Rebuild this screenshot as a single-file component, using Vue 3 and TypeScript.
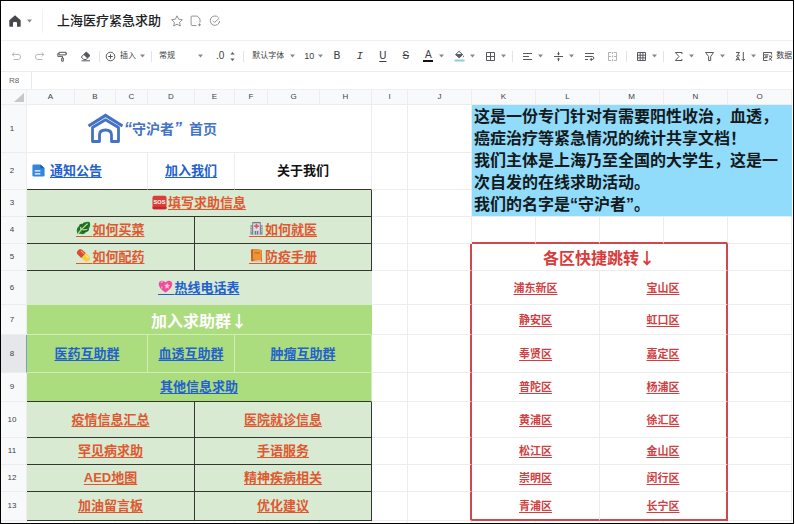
<script setup lang="ts">
type Tone = 'plain' | 'pale' | 'lime'
type Emoji = 'doc' | 'sos' | 'leaf' | 'pill' | 'hospital' | 'book' | 'heart'

interface Cell {
  text: string
  span: number
  tone: Tone
  color?: 'blue' | 'orange' | 'black' | 'white'
  kind?: 'logo' | 'link' | 'text' | 'title'
  emoji?: Emoji
  edges?: string
}

interface Row {
  height: number
  cells: Cell[]
  districts?: [string, string]
}

const columns: { name: string; width: number }[] = [
  { name: 'A', width: 48 },
  { name: 'B', width: 41 },
  { name: 'C', width: 32 },
  { name: 'D', width: 47 },
  { name: 'E', width: 40 },
  { name: 'F', width: 33 },
  { name: 'G', width: 52 },
  { name: 'H', width: 52 },
  { name: 'I', width: 36 },
  { name: 'J', width: 64 },
  { name: 'K', width: 64 },
  { name: 'L', width: 64 },
  { name: 'M', width: 64 },
  { name: 'N', width: 64 },
  { name: 'O', width: 64 },
]

const pair = (a: string, b: string, ea?: Emoji, eb?: Emoji): Cell[] => [
  { text: a, span: 4, tone: 'pale', color: 'orange', kind: 'link', emoji: ea, edges: 'dark-right dark-bottom' },
  { text: b, span: 4, tone: 'pale', color: 'orange', kind: 'link', emoji: eb, edges: 'dark-right dark-bottom' },
]

const rows: Row[] = [
  { height: 48, cells: [{ text: '首页', span: 8, tone: 'plain', kind: 'logo' }] },
  {
    height: 37,
    cells: [
      { text: '通知公告', span: 3, tone: 'plain', color: 'blue', kind: 'link', emoji: 'doc', edges: 'start dark-bottom' },
      { text: '加入我们', span: 2, tone: 'plain', color: 'blue', kind: 'link', edges: 'dark-bottom' },
      { text: '关于我们', span: 3, tone: 'plain', color: 'black', kind: 'text', edges: 'dark-bottom' },
    ],
  },
  {
    height: 27,
    cells: [
      { text: '填写求助信息', span: 8, tone: 'pale', color: 'orange', kind: 'link', emoji: 'sos', edges: 'dark-right dark-bottom' },
    ],
  },
  { height: 27, cells: pair('如何买菜', '如何就医', 'leaf', 'hospital') },
  { height: 27, cells: pair('如何配药', '防疫手册', 'pill', 'book') },
  {
    height: 34,
    cells: [{ text: '热线电话表', span: 8, tone: 'pale', color: 'blue', kind: 'link', emoji: 'heart' }],
    districts: ['浦东新区', '宝山区'],
  },
  {
    height: 30,
    cells: [{ text: '加入求助群↓', span: 8, tone: 'lime', color: 'white', kind: 'title' }],
    districts: ['静安区', '虹口区'],
  },
  {
    height: 38,
    cells: [
      { text: '医药互助群', span: 3, tone: 'lime', color: 'blue', kind: 'link' },
      { text: '血透互助群', span: 2, tone: 'lime', color: 'blue', kind: 'link' },
      { text: '肿瘤互助群', span: 3, tone: 'lime', color: 'blue', kind: 'link' },
    ],
    districts: ['奉贤区', '嘉定区'],
  },
  {
    height: 29,
    cells: [{ text: '其他信息求助', span: 8, tone: 'lime', color: 'blue', kind: 'link', edges: 'dark-bottom' }],
    districts: ['普陀区', '杨浦区'],
  },
  { height: 36, cells: pair('疫情信息汇总', '医院就诊信息'), districts: ['黄浦区', '徐汇区'] },
  { height: 27, cells: pair('罕见病求助', '手语服务'), districts: ['松江区', '金山区'] },
  { height: 27, cells: pair('AED地图', '精神疾病相关'), districts: ['崇明区', '闵行区'] },
  { height: 29, cells: pair('加油留言板', '优化建议'), districts: ['青浦区', '长宁区'] },
]
</script>

<template>
  <div class="frame">
    <header class="topbar">
      <button class="home" aria-label="首页">
        <svg width="12" height="12" viewBox="0 0 12 12"><path d="M6 0.3 0.3 5.2V11q0 .7.7.7h3V8q0-1 1-1h2q1 0 1 1v3.7h3q.7 0 .7-.7V5.2z" fill="#46484c" /></svg>
        <svg class="caret" width="5" height="4" viewBox="0 0 5 4"><path d="M0 .5h5L2.5 3.6z" /></svg>
      </button>
      <h1>上海医疗紧急求助</h1>
      <div class="title-tools">
        <button aria-label="收藏"><svg width="12" height="12" viewBox="0 0 12 12"><path d="m6 .8 1.6 3.4 3.7.5-2.7 2.6.7 3.7L6 9.2 2.7 11l.7-3.7L.7 4.7l3.7-.5z" /></svg></button>
        <button aria-label="移动"><svg width="12" height="12" viewBox="0 0 12 12"><path d="M6.5 10.5H2q-.9 0-.9-.9V2q0-.9.9-.9h5.2L10 3.8v3.7M9.5 8.3v3M8 9.8h3" /></svg></button>
        <button aria-label="已保存"><svg width="12" height="12" viewBox="0 0 12 12"><path d="M9.3 2.4A4.7 4.7 0 1 0 10.6 6M3.8 5.6 5.6 7.4 10.4 3" /></svg></button>
      </div>
    </header>

    <div class="toolbar" role="toolbar">
      <button class="tool faint" aria-label="撤销"><svg width="11" height="11" viewBox="0 0 11 11"><path d="M3.3 1.3 1.2 3.4l2.1 2.1M1.3 3.4h6q2.2 0 2.2 2.5T7.3 8.5H2.5" /></svg></button>
      <button class="tool faint" aria-label="重做"><svg width="11" height="11" viewBox="0 0 11 11"><path d="m7.7 1.3 2.1 2.1-2.1 2.1M9.7 3.4h-6Q1.5 3.4 1.5 5.9T3.7 8.5h4.8" /></svg></button>
      <button class="tool" aria-label="格式刷"><svg width="11" height="11" viewBox="0 0 11 11"><path d="M2 1.3h7v2.6H2zM2 2.6H.8v2.8h4.7V7M4.7 7h1.6v3.2H4.7zM9 2.6h1" /></svg></button>
      <button class="tool" aria-label="清除格式"><svg width="11" height="11" viewBox="0 0 11 11"><path d="M6.3 1 10 4.6 6 8.5H3.7L1.3 6z" /><path class="solid" d="M6.3 1 10 4.6 7.2 7.2 3.6 3.7z" /><path d="M1.5 9.8H10" /></svg></button>
      <span class="divider"></span>
      <button class="insert"><svg width="11" height="11" viewBox="0 0 11 11"><circle cx="5.5" cy="5.5" r="4.3" /><path d="M5.5 3.2v4.6M3.2 5.5h4.6" /></svg>插入<svg class="caret" width="5" height="4" viewBox="0 0 5 4"><path d="M0 .5h5L2.5 3.6z" /></svg></button>
      <span class="divider"></span>
      <label class="choice format"><select aria-label="数字格式"><option>常规</option></select><svg class="caret" width="5" height="4" viewBox="0 0 5 4"><path d="M0 .5h5L2.5 3.6z" /></svg></label>
      <button class="decimals" aria-label="小数位数">.0<svg width="5" height="11" viewBox="0 0 5 11"><path class="solid" d="M.4 3.5h4.2L2.5 1zM.4 7.5h4.2L2.5 10z" /></svg></button>
      <span class="divider"></span>
      <label class="choice family"><select aria-label="字体"><option>默认字体</option></select><svg class="caret" width="5" height="4" viewBox="0 0 5 4"><path d="M0 .5h5L2.5 3.6z" /></svg></label>
      <label class="choice size"><select aria-label="字号"><option>10</option></select><svg class="caret" width="5" height="4" viewBox="0 0 5 4"><path d="M0 .5h5L2.5 3.6z" /></svg></label>
      <button class="tool letter">B</button>
      <button class="tool letter italic">I</button>
      <button class="tool letter underline">U</button>
      <button class="tool letter strike">S</button>
      <button class="tool menu letter"><span class="glyph ink">A</span><svg class="caret" width="5" height="4" viewBox="0 0 5 4"><path d="M0 .5h5L2.5 3.6z" /></svg></button>
      <button class="tool menu" aria-label="填充颜色"><span class="glyph"><svg width="11" height="12" viewBox="0 0 11 12"><path d="M5 1.3 8.6 4.6 5.2 7.8 1.6 4.6zM1.6 4.6h7" /><path class="solid" d="M2 4.8h6.3L5.2 7.7zM9.5 5.3q1 1.4 0 2-1-.6 0-2z" /><path d="M.5 10.5h10" stroke="#8ecbe2" class="swatch" /></svg></span><svg class="caret" width="5" height="4" viewBox="0 0 5 4"><path d="M0 .5h5L2.5 3.6z" /></svg></button>
      <button class="tool menu" aria-label="边框"><span class="glyph"><svg width="11" height="11" viewBox="0 0 11 11"><path d="M1.5 1.5h8v8h-8zM5.5 1.5v8M1.5 5.5h8" /></svg></span><svg class="caret" width="5" height="4" viewBox="0 0 5 4"><path d="M0 .5h5L2.5 3.6z" /></svg></button>
      <span class="divider"></span>
      <button class="tool menu" aria-label="水平对齐"><span class="glyph"><svg width="11" height="11" viewBox="0 0 11 11"><path d="M1 2.5h9M1 5.5h6M1 8.5h9" /></svg></span><svg class="caret" width="5" height="4" viewBox="0 0 5 4"><path d="M0 .5h5L2.5 3.6z" /></svg></button>
      <button class="tool menu" aria-label="垂直对齐"><span class="glyph"><svg width="11" height="11" viewBox="0 0 11 11"><path d="M1 5.5h9M5.5 .8v3M5.5 7.2v3" /><path class="solid" d="M3.9 2.4h3.2L5.5 4.4zM3.9 8.6h3.2L5.5 6.6z" /></svg></span><svg class="caret" width="5" height="4" viewBox="0 0 5 4"><path d="M0 .5h5L2.5 3.6z" /></svg></button>
      <button class="tool" aria-label="自动换行"><svg width="11" height="11" viewBox="0 0 11 11"><path d="M1 2.5h9M1 5.5h7.2q1.6 0 1.6 1.5T8.200 8.500H6.500M1 8.500h3M7.700 7 6.200 8.500l1.500 1.500" /></svg></button>
      <button class="tool faint" aria-label="合并单元格"><svg width="11" height="11" viewBox="0 0 11 11"><path d="M4.2 1.5H1.5v8h2.7M6.8 1.500h2.700v8H6.800M1.500 5.500h2.700M9.500 5.500H6.800M5.500 1v2M5.500 4.500v2M5.500 8v2" /></svg></button>
      <span class="divider"></span>
      <button class="tool menu" aria-label="条件格式"><span class="glyph"><svg width="11" height="11" viewBox="0 0 11 11"><path d="M1.5 1.5h8v8h-8zM1.5 4.2h8M1.5 6.9h8M4.2 1.5v8M6.9 1.5v8" /></svg></span><svg class="caret" width="5" height="4" viewBox="0 0 5 4"><path d="M0 .5h5L2.5 3.6z" /></svg></button>
      <span class="divider"></span>
      <button class="tool menu" aria-label="求和"><span class="glyph"><svg width="11" height="11" viewBox="0 0 11 11"><path d="M9 3V1.5H2.3L6 5.5 2.3 9.5H9V8" /></svg></span><svg class="caret" width="5" height="4" viewBox="0 0 5 4"><path d="M0 .5h5L2.5 3.6z" /></svg></button>
      <button class="tool menu" aria-label="筛选"><span class="glyph"><svg width="11" height="11" viewBox="0 0 11 11"><path d="M1.5 1.5h8L6.7 5.5v4H4.600v-4z" /></svg></span><svg class="caret" width="5" height="4" viewBox="0 0 5 4"><path d="M0 .5h5L2.5 3.6z" /></svg></button>
      <button class="tool menu" aria-label="排序"><span class="glyph"><svg width="11" height="11" viewBox="0 0 11 11"><path d="M1 1.5h3.500L2.700 3.800q2 .2 1.800 1.400M1 5.500 3 4.500M1 9.700l1.900-4 1.800 4M1.600 8.400h2.500M8.300 1v8.500M6.700 8l1.600 1.700L9.900 8" /></svg></span><svg class="caret" width="5" height="4" viewBox="0 0 5 4"><path d="M0 .5h5L2.5 3.6z" /></svg></button>
      <button class="data"><svg width="11" height="11" viewBox="0 0 11 11"><path d="M9.500 3.500v-2h-8v2.300h5M1.500 3.800v2.900h4M1.500 6.700v2.800h4M3 5.200h3M7 5.200h3.300M7 9.500l3-3.500M7.300 7l2.700 2.700" /></svg>数据</button>
    </div>

    <div class="formula">
      <input class="name-box" aria-label="单元格" value="R8" />
      <input class="expression" aria-label="公式" />
    </div>

    <main class="sheet">
      <table>
        <colgroup>
          <col class="head-col" />
          <col v-for="c in columns" :key="c.name" :style="{ width: c.width + 'px' }" />
        </colgroup>
        <thead>
          <tr>
            <th class="corner"><svg width="10" height="9" viewBox="0 0 10 9"><path d="M10 0v9H0z" fill="#c6c7c9" /></svg></th>
            <th v-for="c in columns" :key="c.name" scope="col">{{ c.name }}</th>
          </tr>
        </thead>
        <tbody>
          <tr v-for="(row, i) in rows" :key="i" :style="{ height: row.height + 'px' }">
            <th scope="row" :class="{ current: i === 7 }">{{ i + 1 }}</th>
            <td v-for="cell in row.cells" :key="cell.text" :colspan="cell.span" :class="[cell.tone, cell.color, cell.kind, cell.edges]">
              <span v-if="cell.kind === 'logo'" class="brand">
                <svg width="37" height="31" viewBox="0 0 37 31" fill="none" stroke="#4472c4">
                  <path d="M1.500 13 18.500 2.500 35.500 13" stroke-width="3.200" />
                  <path d="M5.500 14.500v14h7V22q0-5 6-5t6 5v6.500h7v-14L18.500 6.800z" stroke-width="2.800" stroke-linejoin="round" />
                </svg>
                <i>“</i>守沪者<i>”</i><span class="page-name">{{ cell.text }}</span>
              </span>
              <a v-else-if="cell.kind === 'link'" href="#">
                <svg v-if="cell.emoji === 'doc'" class="emoji doc-icon" viewBox="0 0 16 16"><path d="M1.500 3q0-1.500 1.500-1.500h7L14.500 5.500v7.500q0 1.500-1.500 1.500H3q-1.500 0-1.500-1.500z" fill="#3286dd" /><path d="M10 1.500v4h4.500z" fill="#1b5fae" /><path d="M4 8.500h6M4 11.500h6" stroke="#fff" stroke-width="1.300" /></svg>
                <svg v-else-if="cell.emoji === 'sos'" class="emoji" viewBox="0 0 16 16"><rect x=".5" y=".8" width="15" height="14.500" rx="2" fill="#e03b36" /><rect x=".5" y="12.500" width="15" height="2.800" rx="1.400" fill="#c32a28" /><text x="8" y="10" text-anchor="middle" fill="#fff" font-size="6" font-weight="700">SOS</text></svg>
                <svg v-else-if="cell.emoji === 'leaf'" class="emoji lined" viewBox="0 0 16 16"><path d="M1.500 13.500Q-.5 8 3 5.500 3.500 2.500 7 3 9 .3 14.500 1q1.500 4-.5 6.500 0 4-3.500 4.500-2 3-6 1.500z" fill="#27792e" /><path d="M4 10 5.500 4M7 8l1.500-6M9.500 9l4-6M7 11.500l6-2" stroke="#165c22" stroke-width="1.300" /><path d="M2 14Q5 9 12.500 3M5 11V6M7 9.500l5-.5" fill="none" stroke="#b9df92" stroke-width="1.200" /></svg>
                <svg v-else-if="cell.emoji === 'pill'" class="emoji lined" viewBox="0 0 16 16"><g transform="rotate(42 8 8)"><rect x="0" y="4.500" width="16" height="7" rx="3.500" fill="#f4cf3b" /><path d="M8 4.500v7H3.500a3.500 3.500 0 0 1 0-7z" fill="#db4835" /><path d="M3 6.200h4" stroke="#f7a293" stroke-width="1.200" stroke-linecap="round" /><path d="M9.500 6.200h3.500" stroke="#fff2a0" stroke-width="1.200" stroke-linecap="round" /></g></svg>
                <svg v-else-if="cell.emoji === 'hospital'" class="emoji lined" viewBox="0 0 16 16"><path d="M1.500 4.500h13v10h-13z" fill="#8a8f94" /><path d="M4 1.500h8v13H4z" fill="#dfe3e6" /><path d="M3.500 1h9v1.500h-9zM3.500 1h1v13.500h-1zM11.500 1h1v13.500h-1z" fill="#73787d" /><path d="M8 3v5M5.500 5.500h5" stroke="#e0557b" stroke-width="2" /><path d="M2.400 6v6M13.600 6v6" stroke="#d4e3ec" stroke-width="1" stroke-dasharray="1.500 1" /><path d="M6 10.500h4v4H6z" fill="#687d8c" /><path d="M8 10.500v4" stroke="#dfe3e6" stroke-width=".7" /></svg>
                <svg v-else-if="cell.emoji === 'book'" class="emoji lined" viewBox="0 0 16 16"><path d="m2 2 2-1 9.500 1L14 14l-2 1-9.500-1z" fill="#a8501b" /><path d="m4 13.500 9-.5v1l-1 .7-8-.5z" fill="#fff3d8" /><path d="m4 1 9.500 1v11L4 12.500z" fill="#ee9434" /><path d="M2.300 2 4 1v11.500L2.500 14z" fill="#c66a22" /><path d="m6 4 5.500.5v2L6 6z" fill="#d77622" /></svg>
                <svg v-else-if="cell.emoji === 'heart'" class="emoji lined" viewBox="0 0 16 16"><path d="M8 14.500C3 11 .8 8.300.8 5.300.8 1.500 5.500.5 8 3.800 10.500.5 15.200 1.500 15.200 5.300c0 3-2.200 5.700-7.200 9.200z" fill="#ef4d9c" /><path d="M3 4q1-1.500 2.500-1" fill="none" stroke="#ffa3cf" stroke-width="1.200" /><path d="m9.800 4 .8 2.200 2.300.3-1.800 1.500.5 2.300-1.900-1.200-2 1.200.6-2.300L6.500 6.500l2.300-.3z" fill="#ffc5e0" /><path d="m3.500 7 .5 1.300 1.300.2-1 .9.300 1.200-1.200-.7z" fill="#ffb1d5" /></svg>{{ cell.text }}</a>
              <template v-else>{{ cell.text }}</template>
            </td>
            <td></td>
            <td :class="{ 'red-right': i >= 4 }"></td>
            <td v-if="i === 0" class="notice" colspan="5" rowspan="3">
              <p>这是一份专门针对有需要阳性收治，血透，癌症治疗等紧急情况的统计共享文档！</p>
              <p>我们主体是上海乃至全国的大学生，这是一次自发的在线求助活动。</p>
              <p>我们的名字是“守沪者”。</p>
            </td>
            <template v-else-if="i === 3">
              <td v-for="n in 4" :key="n" class="red-bottom"></td>
              <td></td>
            </template>
            <template v-else-if="i === 4">
              <td class="jump-title red-right" colspan="4">各区快捷跳转↓</td>
              <td></td>
            </template>
            <template v-else-if="row.districts">
              <td class="district" :class="{ 'red-bottom': i === 12 }" colspan="2"><a href="#">{{ row.districts[0] }}</a></td>
              <td class="district red-right" :class="{ 'red-bottom': i === 12 }" colspan="2"><a href="#">{{ row.districts[1] }}</a></td>
              <td></td>
            </template>
          </tr>
          <tr class="tail">
            <th></th>
            <td v-for="c in columns" :key="c.name"></td>
          </tr>
        </tbody>
      </table>
    </main>
  </div>
</template>

<style>
body {
  background: #fff;
}
</style>

<style scoped>
.frame {
  box-sizing: border-box;
  height: 100vh;
  margin-right: 1px;
  border: 1px solid #000;
  display: flex;
  flex-direction: column;
  overflow: hidden;
  background: #fff;
  color: #3c3e42;
  font-family: "Liberation Sans", "Noto Sans CJK SC", sans-serif;
}
button,
select,
input {
  margin: 0;
  padding: 0;
  border: 0;
  background: none;
  color: inherit;
  font-family: inherit;
  font-size: 8px;
}
svg {
  flex: none;
}
.topbar {
  box-sizing: border-box;
  height: 40px;
  flex: none;
  display: flex;
  align-items: center;
  border-bottom: 1px solid #f0f0f1;
}
.home {
  display: flex;
  align-items: center;
  gap: 6px;
  height: 24px;
  padding: 0 10px 0 8px;
  border-right: 1px solid #f2f2f3;
}
.caret {
  fill: #85878b;
  stroke: none;
}
h1 {
  margin: 0 10px 0 14px;
  font-size: 13px;
  line-height: 20px;
  font-weight: 500;
  color: #202124;
}
.title-tools {
  display: flex;
  gap: 7px;
}
.title-tools button {
  display: flex;
}
.title-tools svg {
  fill: none;
  stroke: #85878b;
  stroke-width: 0.9;
}
.toolbar {
  box-sizing: border-box;
  height: 31px;
  flex: none;
  display: flex;
  align-items: center;
  padding-left: 4px;
  border-bottom: 1px solid #ececed;
  overflow: hidden;
  white-space: nowrap;
}
.toolbar button {
  flex: none;
  display: flex;
  align-items: center;
  height: 20px;
  line-height: 10px;
}
.toolbar svg:not(.caret) {
  fill: none;
  stroke: #56585d;
  stroke-width: 1;
}
.toolbar svg .solid {
  fill: #56585d;
  stroke: none;
}
.swatch {
  stroke-width: 2;
}
.toolbar .tool {
  width: 23px;
  justify-content: center;
}
.toolbar .menu {
  width: 31px;
  justify-content: flex-start;
}
.toolbar .faint svg:not(.caret) {
  stroke: #b4b5b8;
}
.glyph {
  width: 22px;
  display: flex;
  justify-content: center;
}
.divider {
  flex: none;
  width: 1px;
  height: 11px;
  margin: 0 3px 0 2px;
  background: #e2e3e5;
}
.insert {
  gap: 4px;
  padding: 0 4px 0 2px;
}
.choice {
  flex: none;
  display: flex;
  align-items: center;
  justify-content: space-between;
}
.choice select {
  appearance: none;
  line-height: 12px;
}
.format {
  width: 44px;
  padding: 0 13px 0 4px;
}
.decimals {
  gap: 6px;
  padding-right: 6px;
}
.toolbar .decimals {
  font-size: 10px;
}
.family {
  width: 43px;
  padding: 0 9px 0 5px;
}
.size {
  width: 19px;
  padding-right: 2px;
}
.choice.size select {
  font-size: 9px;
}
.toolbar .letter {
  font-family: Roboto, sans-serif;
  font-size: 11px;
}
.toolbar .italic {
  font-family: "Liberation Mono", monospace;
  font-style: italic;
}
.underline {
  text-decoration: underline;
  text-underline-offset: 2px;
}
.strike {
  text-decoration: line-through;
}
.ink {
  width: 10px;
  margin: 0 6px;
  border-bottom: 2px solid #111;
}
.data {
  gap: 3px;
  padding-left: 2px;
}
.formula {
  box-sizing: border-box;
  height: 18px;
  flex: none;
  display: flex;
  border-bottom: 1px solid #f0f0f1;
}
.name-box {
  box-sizing: border-box;
  width: 31px;
  padding-left: 8px;
  border-right: 1px solid #e8e9ea;
  color: #66686c;
}
.expression {
  flex: 1;
  padding: 0 12px;
}
.sheet {
  flex: 1;
  min-height: 0;
  overflow: hidden;
  padding-right: 1px;
}
table {
  width: 100%;
  table-layout: fixed;
  border-collapse: separate;
  border-spacing: 0;
}
.head-col {
  width: 26px;
}
th,
td {
  box-sizing: border-box;
  padding: 0;
  border-right: 1px solid #ededee;
  border-bottom: 1px solid #ededee;
  text-align: center;
  vertical-align: middle;
  overflow: hidden;
  font-size: 13px;
  line-height: 18px;
  font-weight: 700;
  white-space: nowrap;
}
th {
  background: #f8f9fb;
  color: #3f4145;
  font-size: 8px;
  line-height: 10px;
  font-weight: 400;
}
thead th {
  height: 15px;
}
tbody th {
  padding-right: 3px;
}
.corner {
  padding: 0 2px 0 0;
}
.corner svg {
  display: block;
  margin-left: auto;
}
th.current {
  background: #e6e7ea;
  border-right-color: #6fa3c4;
}
.tail {
  height: 27px;
}
td.pale {
  background: #d9ead3;
  border-color: #d9ead3;
}
td.lime {
  background: #abdc7d;
  border-color: #d0edb5;
}
td.title {
  border-right-color: #abdc7d;
}
td.dark-right {
  border-right-color: #33382f;
}
td.dark-bottom {
  border-bottom-color: #33382f;
}
td.start {
  text-align: left;
  padding-left: 4px;
}
a {
  color: inherit;
  text-decoration: underline;
  text-decoration-thickness: 1px;
  text-underline-offset: 2px;
}
.blue {
  color: #2360cf;
}
.orange {
  color: #df582f;
}
.black {
  color: #111;
}
.white {
  color: #fff;
}
td.title,
td.jump-title {
  font-family: "Noto Sans CJK SC", sans-serif;
  font-size: 16px;
}
.emoji {
  width: 15px;
  height: 15px;
  vertical-align: -3px;
  padding-right: 1px;
}
.lined {
  border-bottom: 1px solid currentColor;
}
.doc-icon {
  padding-right: 4px;
}
.brand {
  display: flex;
  align-items: center;
  padding-left: 60px;
  color: #4472c4;
  font-size: 14px;
}
.brand i {
  width: 8px;
  font-size: 16px;
}
.page-name {
  margin-left: 7px;
}
td.notice {
  padding: 0 2px;
  background: #90dcfa;
  border-right-color: #90dcfa;
  color: #14191c;
  text-align: left;
  white-space: normal;
}
.notice p {
  margin: 0;
  font-size: 16px;
  line-height: 22px;
}
td.red-right {
  border-right: 2px solid #d0484b;
}
td.red-bottom {
  border-bottom: 2px solid #d0484b;
}
.jump-title {
  color: #d83b3b;
}
.district {
  color: #d04043;
  font-size: 11px;
}
</style>
